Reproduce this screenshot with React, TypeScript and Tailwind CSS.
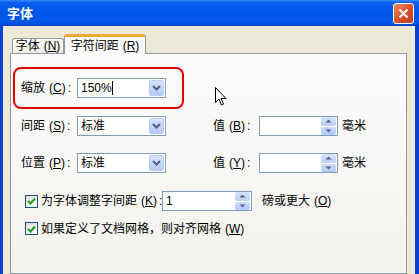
const font = { fontFamily: '"Liberation Sans","Noto Sans CJK SC",sans-serif' };

const Key = ({ k }: { k: string }) => (
  <span className="ml-[4px]">
    (<span className="underline underline-offset-1">{k}</span>)
  </span>
);

const Chevron = () => (
  <svg width="9" height="6" viewBox="0 0 9 6">
    <path d="M1 1 L4.5 4.5 L8 1" fill="none" stroke="#4d6185" strokeWidth="2" />
  </svg>
);

const DropButton = () => (
  <div className="w-[15px] h-[16px] mr-px rounded-[2px] border border-[#b9cdf6] bg-gradient-to-b from-[#d8e4fd] to-[#b4c8f6] flex items-center justify-center">
    <Chevron />
  </div>
);

const Combo = ({ value, caret }: { value: string; caret?: boolean }) => (
  <div className="w-[89px] h-[20px] border border-[#7f9db9] bg-white flex items-center justify-between pl-[3px]">
    <span className="flex items-center text-[12px] leading-none text-black">
      {value}
      {caret && <span className="w-px h-[14px] bg-black" />}
    </span>
    <DropButton />
  </div>
);

const SpinButton = () => (
  <div className="w-[15px] h-[18px] mr-px flex flex-col gap-px">
    <div className="flex-1 rounded-[2px] bg-gradient-to-b from-[#d8e4fd] to-[#bccef8] flex items-center justify-center">
      <svg width="7" height="4" viewBox="0 0 7 4">
        <path d="M0.5 3.5 L3.5 0.5 L6.5 3.5 Z" fill="#4d6185" />
      </svg>
    </div>
    <div className="flex-1 rounded-[2px] bg-gradient-to-b from-[#cbdafb] to-[#b4c8f6] flex items-center justify-center">
      <svg width="7" height="4" viewBox="0 0 7 4">
        <path d="M0.5 0.5 L3.5 3.5 L6.5 0.5 Z" fill="#4d6185" />
      </svg>
    </div>
  </div>
);

const Spin = ({ value, width }: { value?: string; width: string }) => (
  <div className={`${width} h-[20px] border border-[#7f9db9] bg-white flex items-center justify-between pl-[3px]`}>
    <span className="text-[12px] leading-none text-black">{value}</span>
    <SpinButton />
  </div>
);

const Check = () => (
  <div className="w-[13px] h-[13px] border border-[#1c5180] bg-gradient-to-br from-[#dcdcd7] to-white flex items-center justify-center">
    <svg width="9" height="8" viewBox="0 0 9 8">
      <path d="M1 4 L3.5 6.5 L8 1.5" fill="none" stroke="#21a121" strokeWidth="2" />
    </svg>
  </div>
);

const Label = ({ text, k, width }: { text: string; k: string; width: string }) => (
  <span className={`${width} text-[12px] leading-none text-black whitespace-nowrap`}>
    {text}
    <Key k={k} />
    <span className="ml-[2px]">:</span>
  </span>
);

export default function App() {
  return (
    <div className="relative w-[419px] h-[274px] overflow-hidden flex flex-col" style={font}>
      <div className="h-[26px] shrink-0 flex items-center justify-between pl-[7px] pr-[5px] bg-[linear-gradient(to_bottom,#3a8cf8_0%,#0a5ef0_10%,#0055e5_50%,#0058ea_85%,#0040c8_100%)]">
        <span className="text-white font-bold text-[13px] leading-none">字体</span>
        <div className="w-[21px] h-[21px] rounded-[3px] border border-white bg-gradient-to-br from-[#e88a6c] via-[#d9512c] to-[#c2401c] flex items-center justify-center">
          <svg width="11" height="11" viewBox="0 0 11 11">
            <path d="M1.5 1.5 L9.5 9.5 M9.5 1.5 L1.5 9.5" stroke="white" strokeWidth="2.2" />
          </svg>
        </div>
      </div>

      <div className="flex flex-1 min-h-0">
        <div className="w-[3px] bg-[#0842d4]" />
        <div className="flex-1 bg-[#ece9d8] pl-[7px] pr-[8px] pt-[8px] flex flex-col">
          <div className="flex items-end pl-[2px] h-[19px]">
            <div className="w-[52px] h-[15px] border border-b-0 border-[#919b9c] rounded-t-[3px] bg-gradient-to-b from-white to-[#ecebe5] flex items-center justify-center text-[12px] leading-none text-black">
              字体
              <Key k="N" />
            </div>
            <div className="relative z-10 -mb-px w-[82px] h-[20px] border border-b-0 border-[#919b9c] border-t-[3px] border-t-[#f2a838] rounded-t-[3px] bg-[#fcfcfe] flex items-center justify-center text-[12px] leading-none text-black">
              字符间距
              <Key k="R" />
            </div>
          </div>

          <div className="flex-1 border border-[#919b9c] bg-gradient-to-b from-[#fcfcfe] to-[#f3f2ec] pt-[13px] pl-[2px] flex flex-col">
            <div className="w-[171px] h-[42px] border-2 border-[#e00000] rounded-[8px] flex items-center pl-[6px]">
              <Label text="缩放" k="C" width="w-[56px]" />
              <Combo value="150%" caret />
            </div>

            <div className="flex items-center mt-[7px] pl-[8px]">
              <Label text="间距" k="S" width="w-[56px]" />
              <Combo value="标准" />
              <span className="ml-[47px]" />
              <Label text="值" k="B" width="w-[46px]" />
              <Spin width="w-[79px]" />
              <span className="ml-[4px] text-[12px] leading-none text-black">毫米</span>
            </div>

            <div className="flex items-center mt-[17px] pl-[8px]">
              <Label text="位置" k="P" width="w-[56px]" />
              <Combo value="标准" />
              <span className="ml-[47px]" />
              <Label text="值" k="Y" width="w-[46px]" />
              <Spin width="w-[79px]" />
              <span className="ml-[4px] text-[12px] leading-none text-black">毫米</span>
            </div>

            <div className="flex items-center mt-[18px] pl-[12px]">
              <Check />
              <span className="ml-[3px] w-[121px] text-[12px] leading-none text-black whitespace-nowrap">
                为字体调整字间距
                <Key k="K" />
                <span className="ml-[2px]">:</span>
              </span>
              <Spin value="1" width="w-[90px]" />
              <span className="ml-[10px] text-[12px] leading-none text-black whitespace-nowrap">
                磅或更大
                <Key k="O" />
              </span>
            </div>

            <div className="flex items-center mt-[11px] pl-[12px]">
              <Check />
              <span className="ml-[3px] text-[12px] leading-none text-black whitespace-nowrap">
                如果定义了文档网格，则对齐网格
                <Key k="W" />
              </span>
            </div>
          </div>
        </div>
        <div className="w-[4px] bg-[#0842d4]" />
      </div>

      <svg className="absolute left-[215px] top-[87px]" width="12" height="20" viewBox="0 0 12 20">
        <path d="M0.5 0.5 L0.5 15.5 L4 12 L6.5 18 L8.5 17 L6 11.5 L11 11.5 Z" fill="white" stroke="black" strokeWidth="1" />
      </svg>
    </div>
  );
}
